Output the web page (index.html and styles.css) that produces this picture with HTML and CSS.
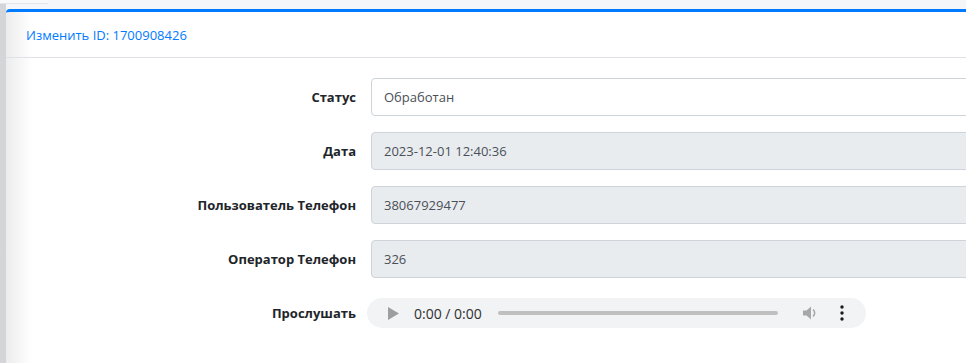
FILE: index.html
```html
<!DOCTYPE html>
<html lang="ru">
<head>
    <meta charset="UTF-8">
    <meta name="viewport" content="width=device-width, initial-scale=1.0">
    <title>Изменить</title>
    <link rel="stylesheet" href="styles.css">
</head>
<body>
    <div class="page">
        <div class="side-edge"></div>
        <div class="main">
            <div class="top-tab"></div>
            <div class="card">
                <div class="card-header">
                    <h3 class="card-title">Изменить ID: 1700908426</h3>
                </div>
                <div class="card-body">
                    <div class="form-row">
                        <label class="form-label" for="status">Статус</label>
                        <input class="form-control" type="text" id="status" value="Обработан">
                    </div>
                    <div class="form-row">
                        <label class="form-label" for="date">Дата</label>
                        <input class="form-control" type="text" id="date" value="2023-12-01 12:40:36" disabled>
                    </div>
                    <div class="form-row">
                        <label class="form-label" for="userPhone">Пользователь Телефон</label>
                        <input class="form-control" type="text" id="userPhone" value="38067929477" disabled>
                    </div>
                    <div class="form-row">
                        <label class="form-label" for="operatorPhone">Оператор Телефон</label>
                        <input class="form-control" type="text" id="operatorPhone" value="326" disabled>
                    </div>
                    <div class="form-row audio-row">
                        <span class="form-label">Прослушать</span>
                        <div class="player">
                            <svg class="play" width="11" height="13" viewBox="0 0 11 13"><path d="M0 0 L11 6.5 L0 13 Z" fill="#9e9e9e"/></svg>
                            <span class="time">0:00 / 0:00</span>
                            <div class="track"></div>
                            <svg class="volume" width="16" height="16" viewBox="0 0 16 16">
                                <path d="M1 5.5 H4.5 L9 1.5 V14.5 L4.5 10.5 H1 Z" fill="#a8a8a8"/>
                                <path d="M11 4.5 A4.5 4.5 0 0 1 11 11.5" stroke="#a8a8a8" stroke-width="1.6" fill="none"/>
                            </svg>
                            <svg class="more" width="4" height="16" viewBox="0 0 4 16">
                                <circle cx="2" cy="2" r="1.7" fill="#1b1b1b"/>
                                <circle cx="2" cy="8" r="1.7" fill="#1b1b1b"/>
                                <circle cx="2" cy="14" r="1.7" fill="#1b1b1b"/>
                            </svg>
                        </div>
                    </div>
                </div>
            </div>
        </div>
    </div>
</body>
</html>
```

FILE: styles.css
```css
body {
    margin: 0;
    background-color: #f4f6f9;
    font-family: "Open Sans", "Noto Sans", sans-serif;
    color: #212529;
    overflow: hidden;
}
.page {
    display: flex;
    height: 363px;
}
.side-edge {
    flex: none;
    width: 6px;
    background-color: #d3d5d8;
}
.main {
    flex: 1;
    min-width: 0;
    position: relative;
    padding-top: 9px;
}
.top-tab {
    position: absolute;
    left: -6px;
    top: 0;
    width: 48px;
    height: 3px;
    background-color: #f8f9fb;
    border-bottom: 1px solid #e2e4e8;
}
.card {
    height: 100%;
    background: linear-gradient(to right, #ececec, #ffffff 26px);
    border-top: 3px solid #007bff;
    border-top-left-radius: 4px;
}
.card-header {
    height: 45px;
    display: flex;
    align-items: center;
    padding: 0 20px;
    border-bottom: 1px solid #dee2e6;
}
.card-title {
    margin: 0;
    font-size: 13px;
    font-weight: normal;
    color: #007bff;
}
.card-body {
    padding-top: 20px;
}
.form-row {
    display: flex;
    align-items: center;
    margin-bottom: 16px;
}
.form-label {
    width: 350px;
    flex: none;
    text-align: right;
    font-size: 13px;
    font-weight: bold;
}
.form-control {
    flex: none;
    width: 700px;
    height: 38px;
    box-sizing: border-box;
    margin-left: 15px;
    padding: 0 12px;
    border: 1px solid #ced4da;
    border-radius: 4px;
    background-color: #fff;
    font-family: inherit;
    font-size: 13px;
    color: #495057;
}
.form-control:disabled {
    background-color: #e9ecef;
}
.audio-row {
    height: 38px;
    margin-top: 4px;
}
.player {
    flex: none;
    width: 499px;
    height: 30px;
    margin-left: 11px;
    border-radius: 15px;
    background-color: #f1f3f4;
    display: flex;
    align-items: center;
}
.play {
    margin-left: 21px;
}
.time {
    margin-left: 15px;
    font-size: 14px;
    color: #303030;
}
.track {
    width: 280px;
    height: 4px;
    margin-left: 16px;
    border-radius: 2px;
    background-color: #c0c0c0;
}
.volume {
    margin-left: 24px;
}
.more {
    margin-left: 22px;
}
```
